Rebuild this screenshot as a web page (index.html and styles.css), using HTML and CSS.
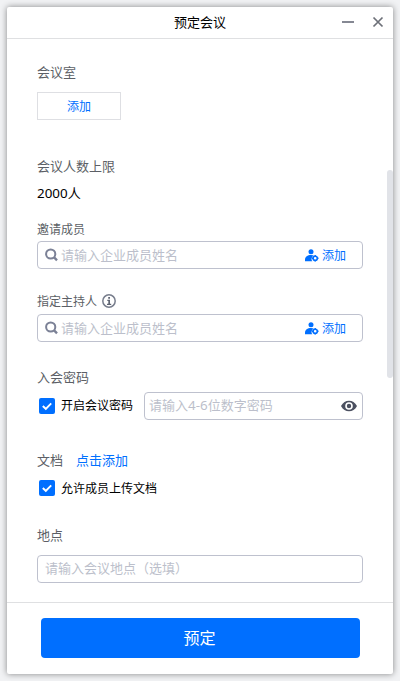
FILE: index.html
```html
<!DOCTYPE html>
<html lang="zh-CN">
<head>
<meta charset="utf-8">
<title>预定会议</title>
<link rel="stylesheet" href="styles.css">
</head>
<body>
<svg class="defs" width="0" height="0" aria-hidden="true">
  <symbol id="search" viewBox="0 0 14 14"><circle cx="5.700" cy="6" r="4.600" fill="none" stroke="#7b8196" stroke-width="2"/><path d="M8.900 9.200L12 12.300" stroke="#7b8196" stroke-width="2.400"/></symbol>
  <symbol id="member" viewBox="0 0 14 13"><circle cx="6" cy="2.800" r="2.500" fill="#006fff"/><path d="M0 12.300V11C0 7.800 2.500 6 6 6C7.300 6 8.300 6.300 9 6.700C6.700 7.300 5.800 10.500 7.300 12.300Z" fill="#006fff"/><circle cx="10.200" cy="9.300" r="2.100" fill="none" stroke="#006fff" stroke-width="1.600"/><path d="M10.200 6V7.200M10.200 11.400V12.600M6.900 9.300H8.100M12.300 9.300H13.500" stroke="#006fff" stroke-width="1.400"/></symbol>
  <symbol id="check" viewBox="0 0 16 16"><path d="M3.800 8L6.800 10.800L12.200 5.300" fill="none" stroke="#fff" stroke-width="1.900"/></symbol>
</svg>
<div class="window">
  <header class="titlebar">
    <h1>预定会议</h1>
    <div class="controls">
      <svg width="12" height="12" viewBox="0 0 12 12"><path d="M0 6H12" stroke="#858893" stroke-width="2"/></svg>
      <svg width="12" height="12" viewBox="0 0 12 12"><path d="M1.500 1.500L10.500 10.500M10.500 1.500L1.500 10.500" stroke="#6d7078" stroke-width="1.700"/></svg>
    </div>
  </header>
  <main class="form">
    <section class="room">
      <div class="label">会议室</div>
      <button class="outline">添加</button>
    </section>
    <section class="limit">
      <div class="label">会议人数上限</div>
      <div class="value"><span class="digits">2000</span>人</div>
    </section>
    <section class="invite">
      <div class="label small">邀请成员</div>
      <div class="field">
        <svg class="lens" width="14" height="14"><use href="#search"/></svg>
        <span class="hint">请输入企业成员姓名</span>
        <span class="pick"><svg width="14" height="13"><use href="#member"/></svg><span class="drop">添加</span></span>
      </div>
    </section>
    <section class="host">
      <div class="label small"><span class="drop">指定主持人</span><svg class="info" width="14" height="14" viewBox="0 0 14 14"><circle cx="7" cy="7" r="6.200" fill="none" stroke="#777d8c" stroke-width="1.500"/><path d="M6.200 3H8V4.700H6.200ZM5.300 5.800H8V9.700H9.200V10.900H5V9.700H6.300V6.900H5.300Z" fill="#5f6573"/></svg></div>
      <div class="field">
        <svg class="lens" width="14" height="14"><use href="#search"/></svg>
        <span class="hint">请输入企业成员姓名</span>
        <span class="pick"><svg width="14" height="13"><use href="#member"/></svg><span class="drop">添加</span></span>
      </div>
    </section>
    <section class="password">
      <div class="label">入会密码</div>
      <div class="password-row">
        <div class="option"><svg class="checkbox" width="16" height="16"><use href="#check"/></svg>开启会议密码</div>
        <div class="field code">
          <span class="hint">请输入<span class="digits">4-6</span>位数字密码</span>
          <svg class="eye" width="16" height="12" viewBox="0 0 16 12"><path d="M0 6C2 2.300 4.700.7 8 .7S14 2.300 16 6C14 9.700 11.300 11.300 8 11.300S2 9.700 0 6Z" fill="#4b5060"/><circle cx="8" cy="6" r="3" fill="#4b5060" stroke="#fff" stroke-width="1.600"/></svg>
        </div>
      </div>
    </section>
    <section class="docs">
      <div class="label">文档<a class="link">点击添加</a></div>
      <div class="option"><svg class="checkbox" width="16" height="16"><use href="#check"/></svg><span class="drop">允许成员上传文档</span></div>
    </section>
    <section class="place">
      <div class="label">地点</div>
      <div class="field"><span class="hint">请输入会议地点（选填）</span></div>
    </section>
    <div class="scrollbar"></div>
  </main>
  <footer class="footer"><button class="submit">预定</button></footer>
</div>
</body>
</html>
```
FILE: styles.css
```css
* { box-sizing: border-box; }
body {
  margin: 0;
  padding: 7px;
  height: 681px;
  overflow: hidden;
  background: #f1f2f4;
  color: #000;
  font: 13px/20px "Noto Sans", "Noto Sans CJK SC", sans-serif;
}
.defs { position: absolute; }
svg { flex: none; display: block; }
button { font: inherit; padding: 0; }
.window {
  display: flex;
  flex-direction: column;
  height: 667px;
  background: #fff;
  border-radius: 2px;
  box-shadow: 0 0 6px rgba(0, 0, 0, .45);
}
.titlebar {
  position: relative;
  display: flex;
  align-items: center;
  justify-content: center;
  height: 32px;
  border-bottom: 1px solid #dfe0e2;
}
h1 { margin: 0; padding-bottom: 2px; font-size: 13px; font-weight: 400; }
.controls { position: absolute; right: 9px; top: 9px; display: flex; gap: 18px; }
.form { position: relative; flex: 1; padding: 23px 30px 0; }
.label { display: flex; align-items: center; height: 20px; color: #5c5f66; white-space: nowrap; }
.small { font-size: 12px; }
.drop { padding-top: 2px; }
.outline {
  display: block;
  width: 84px;
  height: 28px;
  margin-top: 10px;
  padding-top: 2px;
  border: 1px solid #dedfe3;
  background: #fff;
  color: #006fff;
  font-size: 12px;
}
.limit { margin-top: 36px; }
.value { margin-top: 7px; }
.digits { font-size: 13.4px; line-height: 1; }
.invite { margin-top: 17px; }
.field {
  display: flex;
  align-items: center;
  height: 28px;
  padding: 0 7px;
  border: 1px solid #bec1ce;
  border-radius: 4px;
}
.hint { color: #bcbfcb; white-space: nowrap; }
.lens { margin-right: 2px; }
.invite .field { margin-top: 1px; }
.pick { display: flex; align-items: center; gap: 3px; margin: 0 9px 0 auto; color: #006fff; font-size: 12px; }
.host { margin-top: 22px; }
.host .field { margin-top: 3px; }
.info { margin-left: 5px; }
.password { margin-top: 25px; }
.password-row { display: flex; align-items: center; justify-content: space-between; margin-top: 5px; }
.option { display: flex; align-items: center; gap: 6px; height: 20px; padding-left: 2px; font-size: 12px; white-space: nowrap; }
.checkbox { background: #006fff; border-radius: 2px; }
.code { width: 219px; padding: 0 5px 0 4px; justify-content: space-between; }
.code .hint, .place .hint { padding-bottom: 2px; }
.docs { margin-top: 30px; }
.link { margin-left: 13px; color: #006fff; }
.docs .option { margin-top: 8px; }
.place { margin-top: 27px; }
.place .field { margin-top: 10px; }
.scrollbar {
  position: absolute;
  right: 0;
  top: 131px;
  width: 6px;
  height: 208px;
  border-radius: 3px;
  background: #e1e3e8;
}
.footer { height: 72px; padding: 15px 33px 0 34px; border-top: 1px solid #dfe0e2; }
.submit {
  display: block;
  width: 100%;
  height: 40px;
  padding-right: 2px;
  border: 0;
  border-radius: 4px;
  background: #006fff;
  color: #fff;
  font-size: 16px;
}
```
